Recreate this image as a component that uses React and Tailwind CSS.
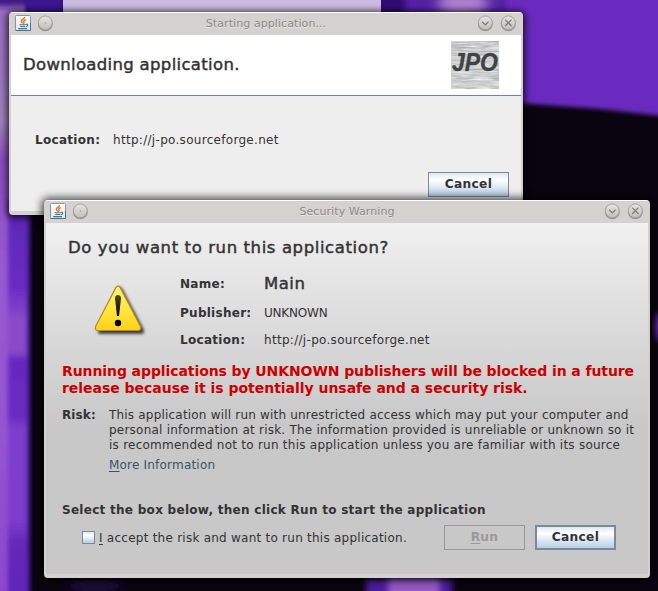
import React from "react";

function JavaIcon() {
  return (
    <svg width="16" height="16" viewBox="0 0 16 16" className="shrink-0">
      <defs>
        <linearGradient id="javaBg" x1="0" y1="0" x2="0" y2="1">
          <stop offset="0" stopColor="#ffffff" />
          <stop offset="1" stopColor="#dde6ee" />
        </linearGradient>
      </defs>
      <rect x="0.5" y="0.5" width="15" height="15" rx="1" fill="url(#javaBg)" stroke="#7c98ac" />
      <path d="M0.5 15.5H15.5V8" fill="none" stroke="#42708f" />
      <path d="M9.5 2.2C9.8 4 6 4.6 6.3 6.2C6.5 7.2 7.6 7.4 7.6 8.6M10.8 4.6C9 5.2 8.4 6 9 7C9.3 7.7 8.8 8.2 8.3 8.6" fill="none" stroke="#e8751a" strokeWidth="1.4" />
      <path d="M4.5 9.7H10.6M5.3 11.5H10.2M3.2 13.6H12M10.8 9.5C13.4 8.5 13.4 11.2 10.8 11.7" fill="none" stroke="#467493" strokeWidth="1.1" />
    </svg>
  );
}

function RoundButton({ kind }) {
  return (
    <svg width="18" height="18" viewBox="0 0 18 18" className="shrink-0">
      <defs>
        <linearGradient id="knob" x1="0" y1="0" x2="0" y2="1">
          <stop offset="0" stopColor="#e6e4e2" />
          <stop offset="1" stopColor="#c2bfbc" />
        </linearGradient>
      </defs>
      <circle cx="9.3" cy="9.7" r="7.5" fill="#96938f" />
      <circle cx="9.3" cy="8.8" r="6.9" fill="url(#knob)" stroke="#a3a09d" strokeWidth="0.9" />
      {kind === "dot" && <rect x="8.8" y="8.5" width="1" height="1" fill="#777" />}
      {kind === "down" && <path d="M6.1 7.7L9.3 10.9L12.5 7.7" fill="none" stroke="#7f7c7a" strokeWidth="1.3" />}
      {kind === "close" && <path d="M6.1 5.6L12.5 12M12.5 5.6L6.1 12" fill="none" stroke="#7f7c7a" strokeWidth="1.3" />}
    </svg>
  );
}

function TitleBar({ title }) {
  return (
    <div className="flex h-[22px] shrink-0 items-center justify-between px-[4px] pb-[2px]">
      <div className="flex w-[60px] items-center gap-[5px]">
        <JavaIcon />
        <RoundButton kind="dot" />
      </div>
      <span className="pt-[2px] text-[11px] leading-[14px] tracking-[0.08px] text-[#8b8886] [text-shadow:0_1px_0_#e8e6e4]">{title}</span>
      <div className="flex w-[60px] items-center justify-end gap-[5px]">
        <RoundButton kind="down" />
        <RoundButton kind="close" />
      </div>
    </div>
  );
}

function WarningIcon() {
  return (
    <svg width="58" height="54" viewBox="0 0 58 54" className="shrink-0">
      <defs>
        <linearGradient id="warn" x1="0" y1="0" x2="0" y2="1">
          <stop offset="0" stopColor="#fff27a" />
          <stop offset="0.55" stopColor="#ffe640" />
          <stop offset="1" stopColor="#fdd116" />
        </linearGradient>
        <linearGradient id="mark" x1="0" y1="0" x2="0" y2="1">
          <stop offset="0" stopColor="#4d4a1c" />
          <stop offset="1" stopColor="#000000" />
        </linearGradient>
        <filter id="soft" x="-20%" y="-20%" width="150%" height="150%">
          <feGaussianBlur stdDeviation="1.5" />
        </filter>
      </defs>
      <path d="M28 3Q31 2 33 6L54 46Q55 50 51 50H11Q7 50 8 47Z" fill="#222" opacity="0.85" filter="url(#soft)" />
      <path d="M25.8 3.6Q28 0.6 30.2 3.6L50.5 42.5Q51.5 46.5 48 46.5H8Q4.5 46.5 5.6 42.5Z" fill="url(#warn)" stroke="#b88a16" strokeWidth="1.2" />
      <path d="M25 14.5Q25 11 28 11Q31 11 31 14.5L29 32H27Z" fill="url(#mark)" />
      <circle cx="28" cy="39" r="3.2" fill="#000" />
    </svg>
  );
}

function Logo() {
  return (
    <svg width="48" height="48" viewBox="0 0 48 48" className="shrink-0 overflow-visible">
      <defs>
        <filter id="wood" x="0" y="0" width="100%" height="100%" colorInterpolationFilters="sRGB">
          <feTurbulence type="fractalNoise" baseFrequency="0.05 0.6" numOctaves="3" seed="4" />
          <feColorMatrix values="0.4 0 0 0 0.6 0.4 0 0 0 0.61 0.4 0 0 0 0.61 0 0 0 0 1" />
        </filter>
      </defs>
      <rect width="48" height="48" filter="url(#wood)" />
      <text x="1" y="29.5" textLength="46" lengthAdjust="spacingAndGlyphs" fontFamily="Liberation Sans, sans-serif" fontSize="25" fontWeight="700" fontStyle="italic" fill="#404343" stroke="#404343" strokeOpacity="0.6" strokeWidth="0.6">JPO</text>
    </svg>
  );
}

function Wallpaper() {
  return (
    <svg width="658" height="591" viewBox="0 0 658 591" className="absolute inset-0">
      <defs>
        <filter id="b2" x="-50%" y="-10%" width="200%" height="120%"><feGaussianBlur stdDeviation="2" /></filter>
        <filter id="b3" x="-30%" y="-30%" width="160%" height="160%"><feGaussianBlur stdDeviation="3" /></filter>
        <filter id="b6" x="-50%" y="-50%" width="200%" height="200%"><feGaussianBlur stdDeviation="6" /></filter>
        <linearGradient id="leftStrip" x1="0" y1="0" x2="0" y2="1">
          <stop offset="0" stopColor="#9568c4" />
          <stop offset="0.15" stopColor="#9a76c0" />
          <stop offset="0.22" stopColor="#a184bc" />
          <stop offset="0.28" stopColor="#8a4cc0" />
          <stop offset="0.45" stopColor="#985ad0" />
          <stop offset="0.7" stopColor="#9555d0" />
          <stop offset="1" stopColor="#8a45d0" />
        </linearGradient>
        <linearGradient id="innerStrip" x1="0" y1="0" x2="0" y2="1">
          <stop offset="0" stopColor="#5a27b4" />
          <stop offset="0.22" stopColor="#6a2cc4" />
          <stop offset="0.3" stopColor="#8a4acb" />
          <stop offset="0.38" stopColor="#8848ca" />
          <stop offset="0.4" stopColor="#6828c0" />
          <stop offset="0.54" stopColor="#6a2ac2" />
          <stop offset="0.57" stopColor="#7e3ccd" />
          <stop offset="0.8" stopColor="#7e3ccd" />
          <stop offset="0.86" stopColor="#6429b8" />
          <stop offset="1" stopColor="#5f25b8" />
        </linearGradient>
      </defs>
      <rect width="658" height="591" fill="#09040f" />
      <rect x="-20" y="-20" width="47" height="640" fill="url(#leftStrip)" filter="url(#b2)" />
      <rect x="20" y="150" width="10" height="460" fill="#3c1788" filter="url(#b3)" />
      <rect x="8" y="200" width="19" height="400" fill="url(#innerStrip)" filter="url(#b2)" />
      <rect x="-10" y="-10" width="76" height="16" fill="#3a1482" filter="url(#b3)" />
      <rect x="26" y="-20" width="38" height="50" fill="#3a1290" filter="url(#b2)" />
      <rect x="63" y="-20" width="318" height="50" fill="#cdbce2" />
      <rect x="381" y="-20" width="30" height="50" fill="#2f0d70" />
      <rect x="405" y="-20" width="130" height="50" fill="#5524a4" filter="url(#b3)" />
      <ellipse cx="463" cy="4" rx="26" ry="12" fill="#b083d2" filter="url(#b6)" />
      <path d="M507 -20H680V118L600 109L505 102Z" fill="#6a2bbf" filter="url(#b2)" />
      <ellipse cx="660" cy="327" rx="5" ry="14" fill="#6a2cc0" filter="url(#b3)" />
      <rect x="366" y="578" width="86" height="30" fill="#4c1f98" filter="url(#b3)" />
      <rect x="388" y="578" width="52" height="30" fill="#9459c2" filter="url(#b3)" />
      <ellipse cx="95" cy="586" rx="30" ry="6" fill="#241046" filter="url(#b6)" />
    </svg>
  );
}

const headline = "text-[16.5px] leading-[20px] [-webkit-text-stroke:0.45px_#333333]";
const button = "flex h-[25px] w-[81px] items-center justify-center border font-bold leading-[15px] tracking-[0.3px] text-[12.2px]";
const metal = "border-[#7a8a99] bg-linear-to-b from-[#dde8f3] via-white via-30% to-[#b8cfe5]";

export default function App() {
  return (
    <div className="relative h-[591px] w-[658px] overflow-hidden bg-[#09040f] font-['DejaVu_Sans',sans-serif] text-[12px] leading-[15px] text-[#333333]">
      <Wallpaper />

      <section className="absolute top-[12px] left-[9px] flex h-[203px] w-[514px] flex-col rounded-[4px] border-x-2 border-t border-b-4 border-[#d5d1ce] border-t-white bg-[#d5d1ce] shadow-[0_1px_7px_2px_rgba(0,0,0,0.75)]">
        <TitleBar title="Starting application..." />
        <header className="flex h-[60px] shrink-0 items-center justify-between bg-white pr-[22px] pl-[12px]">
          <h1 className={`${headline} pb-[1px] tracking-[0.32px]`}>Downloading application.</h1>
          <Logo />
        </header>
        <div className="flex flex-1 flex-col justify-between border-t border-t-[#6382bf] bg-[#eeeeee] pt-[37px] pr-[12px] pb-[14px] pl-[24px]">
          <div className="flex">
            <span className="w-[78px] font-bold tracking-[0.3px]">Location:</span>
            <span className="tracking-[0.3px]">http://j-po.sourceforge.net</span>
          </div>
          <button className={`${button} ${metal} self-end`}>Cancel</button>
        </div>
      </section>

      <section className="absolute top-[200px] left-[44px] flex h-[378px] w-[606px] flex-col rounded-[4px] border-x-2 border-t border-b-4 border-[#d5d2cd] border-t-white bg-[#d5d1ce] shadow-[0_0_8px_2px_rgba(0,0,0,0.75)]">
        <TitleBar title="Security Warning" />
        <div className="flex flex-1 flex-col bg-linear-to-b from-[#f0f0f0] to-[#c8c8c8] to-58% pt-[15px] pl-[16px]">
          <h2 className={`${headline} pl-[6px] tracking-[0.6px]`}>Do you want to run this application?</h2>
          <div className="flex h-[105px] pt-[15px]">
            <div className="w-[118px] pt-[11px] pl-[28px]">
              <WarningIcon />
            </div>
            <dl className="grid auto-rows-min grid-cols-[84px_auto] content-start items-end pt-[1px]">
              <dt className="pb-[2px] font-bold tracking-[0.3px]">Name:</dt>
              <dd className={`${headline} tracking-[0.5px]`}>Main</dd>
              <dt className="pt-[12px] font-bold tracking-[0.27px]">Publisher:</dt>
              <dd className="pt-[12px] tracking-[-0.2px]">UNKNOWN</dd>
              <dt className="pt-[12px] font-bold tracking-[0.3px]">Location:</dt>
              <dd className="pt-[12px] tracking-[0.3px]">http://j-po.sourceforge.net</dd>
            </dl>
          </div>
          <p className="text-[14px] leading-[17px] font-bold whitespace-nowrap text-[#cc0000]">
            <span className="block tracking-[-0.09px]">Running applications by UNKNOWN publishers will be blocked in a future</span>
            <span className="block tracking-[-0.03px]">release because it is potentially unsafe and a security risk.</span>
          </p>
          <div className="flex pt-[11px]">
            <b className="w-[47px] tracking-[0.1px]">Risk:</b>
            <div className="whitespace-nowrap">
              <p className="tracking-[0.195px]">This application will run with unrestricted access which may put your computer and</p>
              <p className="tracking-[0.225px]">personal information at risk. The information provided is unreliable or unknown so it</p>
              <p className="tracking-[0.245px]">is recommended not to run this application unless you are familiar with its source</p>
              <a className="block pt-[5px] tracking-[0.2px] text-[#35556b]"><u className="underline-offset-2">M</u>ore Information</a>
            </div>
          </div>
          <p className="pt-[30px] font-bold tracking-[0.28px]">Select the box below, then click Run to start the application</p>
          <div className="flex pt-[7px] pl-[20px]">
            <label className="flex w-[362px] items-center gap-[4px]">
              <span className={`size-[13px] border ${metal}`} />
              <span className="pt-[2px] tracking-[0.245px]"><u className="underline-offset-2">I</u> accept the risk and want to run this application.</span>
            </label>
            <button className={`${button} border-[#999999] text-[#999999]`}><u className="underline-offset-2">R</u>un</button>
            <button className={`${button} ${metal} ml-[10px] border-2`}>Cancel</button>
          </div>
        </div>
      </section>
    </div>
  );
}
